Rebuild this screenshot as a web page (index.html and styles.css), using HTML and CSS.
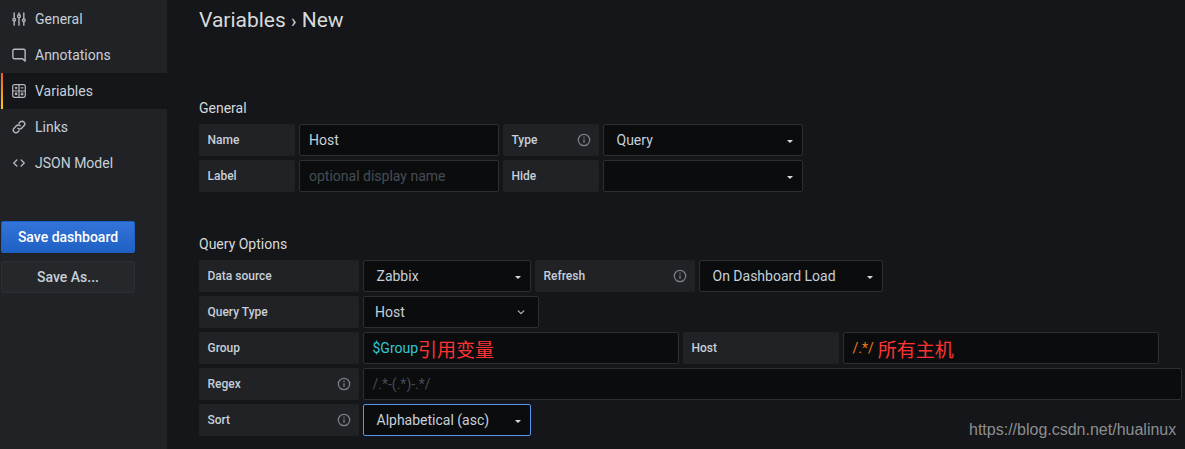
FILE: index.html
```html
<!DOCTYPE html>
<html lang="en">
<head>
<meta charset="utf-8">
<title>Variables - New</title>
<link rel="stylesheet" href="styles.css">
</head>
<body>
<div class="page">
  <aside class="sidebar">
    <nav class="nav">
      <a class="nav-item"><svg class="nav-icon" viewBox="0 0 16 16" fill="none" stroke="currentColor" stroke-width="1.6" stroke-linecap="round"><path d="M2.5 1v6.200M2.500 10.500v4.500M8 1v1.800M8 6.800V15M13.500 1v6.700M13.500 11v4"/><circle cx="2.500" cy="8.800" r="1.500"/><circle cx="8" cy="4.800" r="1.600"/><circle cx="13.500" cy="9.300" r="1.500"/></svg><span>General</span></a>
      <a class="nav-item"><svg class="nav-icon" viewBox="0 0 16 16" fill="none" stroke="currentColor" stroke-width="1.600" stroke-linejoin="round"><path d="M2.500 1.500h11A1.500 1.500 0 0 1 15 3v12l-3-2.800H2.500A1.500 1.500 0 0 1 1 10.700V3a1.500 1.500 0 0 1 1.500-1.500z"/></svg><span>Annotations</span></a>
      <a class="nav-item active"><svg class="nav-icon" viewBox="0 0 16 16" fill="none" stroke="currentColor" stroke-width="1.400"><rect x=".8" y=".8" width="14.400" height="14.400" rx="2"/><path d="M8 1v14M1 8h14M3.200 4.500h3M4.700 3v3M10 4.500h3M10 10.300h3M10 12.200h3M3.500 10l2.400 2.400M5.900 10l-2.400 2.400"/></svg><span>Variables</span></a>
      <a class="nav-item"><svg class="nav-icon" viewBox="0 0 16 16" fill="none" stroke="currentColor" stroke-width="1.600" stroke-linecap="round"><path d="M6.700 9.300a3 3 0 0 0 4.300 0l2.600-2.600a3 3 0 0 0-4.300-4.300L8 3.700"/><path d="M9.300 6.700a3 3 0 0 0-4.300 0l-2.600 2.600a3 3 0 0 0 4.300 4.300L8 12.300"/></svg><span>Links</span></a>
      <a class="nav-item"><svg class="nav-icon" viewBox="0 0 16 16" fill="none" stroke="currentColor" stroke-width="1.500" stroke-linecap="round" stroke-linejoin="round"><path d="M5.500 4.500 2 8l3.500 3.500M10.500 4.500 14 8l-3.500 3.500"/></svg><span>JSON Model</span></a>
    </nav>
    <div class="actions">
      <button class="btn btn-primary">Save dashboard</button>
      <button class="btn btn-secondary">Save As...</button>
    </div>
  </aside>
  <main class="main">
    <h1 class="title">Variables <span class="crumb">›</span> New</h1>
    <h2 class="section section-general">General</h2>
    <div class="rows">
      <div class="row">
        <div class="label w96">Name</div>
        <div class="field w200">Host</div>
        <div class="label w96">Type<svg class="info" viewBox="0 0 14 14"><use href="#i"/></svg></div>
        <div class="field select w200 pad-select">Query<i class="caret"></i></div>
      </div>
      <div class="row">
        <div class="label w96">Label</div>
        <div class="field w200 placeholder">optional display name</div>
        <div class="label w96">Hide</div>
        <div class="field select w200 pad-select"><i class="caret"></i></div>
      </div>
    </div>
    <h2 class="section section-query">Query Options</h2>
    <div class="rows">
      <div class="row">
        <div class="label w160">Data source</div>
        <div class="field select w168 pad-select">Zabbix<i class="caret"></i></div>
        <div class="label w160">Refresh<svg class="info" viewBox="0 0 14 14"><use href="#i"/></svg></div>
        <div class="field select w184 pad-select">On Dashboard Load<i class="caret"></i></div>
      </div>
      <div class="row">
        <div class="label w160">Query Type</div>
        <div class="field select w176 pad-query">Host<svg class="chev" viewBox="0 0 10 6" fill="none" stroke="currentColor" stroke-width="1.500" stroke-linecap="round" stroke-linejoin="round"><path d="M1.500 1 5 4.500 8.500 1"/></svg></div>
      </div>
      <div class="row">
        <div class="label w160">Group</div>
        <div class="field w316 pad-small"><span class="cyan">$Group</span><span class="note note-a">引用变量</span></div>
        <div class="label w156">Host</div>
        <div class="field w316 pad-small"><span class="orange">/.*/</span><span class="note note-b">所有主机</span></div>
      </div>
      <div class="row">
        <div class="label w160">Regex<svg class="info" viewBox="0 0 14 14"><use href="#i"/></svg></div>
        <div class="field w819 pad-small placeholder">/.*-(.*)-.*/</div>
      </div>
      <div class="row">
        <div class="label w160">Sort<svg class="info" viewBox="0 0 14 14"><use href="#i"/></svg></div>
        <div class="field select w168 pad-select focused">Alphabetical (asc)<i class="caret"></i></div>
      </div>
    </div>
  </main>
</div>
<div class="watermark">https://blog.csdn.net/hualinux</div>
<svg class="defs" width="0" height="0"><symbol id="i" viewBox="0 0 14 14"><circle cx="7" cy="7" r="5.700" fill="none" stroke="currentColor" stroke-width="1.200"/><path d="M7 6.300v3.500" stroke="currentColor" stroke-width="1.300"/><circle cx="7" cy="4.300" r=".8" fill="currentColor"/></symbol></svg>
</body>
</html>
```
FILE: styles.css
```css
* { box-sizing: border-box; }
html, body { margin: 0; height: 100%; overflow: hidden; background: #141619; }
body { font-family: Roboto, "Noto Sans CJK SC", sans-serif; color: #c7d0d9; font-size: 14px; }
.page { display: flex; height: 449px; width: 1185px; }
.sidebar { width: 167px; flex: none; background: #202226; padding: 1px 0 0 1px; }
.nav { display: flex; flex-direction: column; }
.nav-item { display: flex; align-items: center; height: 36px; padding-left: 11px; gap: 9px; font-size: 14px; color: #c7d0d9; }
.nav-icon { width: 14px; height: 14px; flex: none; color: #b5b8bd; }
.nav-item.active { background: #141619; position: relative; }
.nav-item.active::before { content: ""; position: absolute; left: 0; top: 0; bottom: 0; width: 2px; background: linear-gradient(#f05a28, #fbca0a); }
.actions { display: flex; flex-direction: column; gap: 8px; margin-top: 40px; width: 134px; }
.btn { height: 32px; border-radius: 2px; font-family: inherit; font-size: 14px; font-weight: 500; padding: 0; }
.btn-primary { background: linear-gradient(#3274d9, #1f60c4); color: #fff; border: 1px solid #1f60c4; }
.btn-secondary { background: #25272b; color: #c7d0d9; border: 1px solid #2c2e33; }
.main { flex: 1; padding-left: 32px; min-width: 0; }
.title { margin: 5px 0 0; height: 30px; font-size: 21px; font-weight: 400; line-height: 30px; color: #d8d9da; }
.crumb { font-size: 18px; line-height: 0; }
.section { margin: 0; font-size: 14px; font-weight: 400; line-height: 20px; color: #d8d9da; }
.section-general { margin-top: 63px; margin-bottom: 6px; }
.section-query { margin-top: 42px; margin-bottom: 6px; }
.rows { display: flex; flex-direction: column; gap: 4px; }
.row { display: flex; gap: 4px; height: 32px; }
.label { display: flex; align-items: center; justify-content: space-between; height: 32px; padding: 0 8px 0 8.500px; background: #202226; border-radius: 2px; font-size: 12px; font-weight: 500; color: #c7d0d9; }
.info { width: 14px; height: 14px; color: #7b8087; }
.field { display: flex; align-items: center; height: 32px; padding: 0 9px; background: #0b0c0e; border: 1px solid #2c2e33; border-radius: 2px; font-size: 14px; color: #c7d0d9; position: relative; white-space: nowrap; }
.select { justify-content: space-between; }
.pad-select { padding-left: 12.500px; padding-right: 9px; }
.pad-query { padding-left: 11px; padding-right: 13px; }
.pad-small { padding-left: 8.500px; }
.placeholder { color: #464c54; }
.focused { border-color: #5794f2; }
.caret { width: 0; height: 0; margin-left: auto; border-left: 3.500px solid transparent; border-right: 3.500px solid transparent; border-top: 3.500px solid #d8d9da; margin-top: 3px; }
.chev { width: 8px; height: 5px; color: #b5b8bd; }
.cyan { color: #33c6d3; font-size: 14px; }
.orange { color: #eb7b18; font-size: 14px; }
.note { color: #ff3333; font-size: 19px; font-family: "Noto Sans CJK SC", sans-serif; font-weight: 400; }
.note-a { margin-left: 0; }
.note-b { margin-left: 4px; }
.w96 { width: 96px; } .w156 { width: 156px; } .w160 { width: 160px; } .w168 { width: 168px; } .w176 { width: 176px; } .w184 { width: 184px; } .w200 { width: 200px; } .w316 { width: 316px; } .w819 { width: 819px; }
.watermark { position: absolute; left: 969px; top: 420px; font-family: "Liberation Sans", sans-serif; font-size: 16px; line-height: 20px; color: #8d8e90; }
.defs { position: absolute; }
```
